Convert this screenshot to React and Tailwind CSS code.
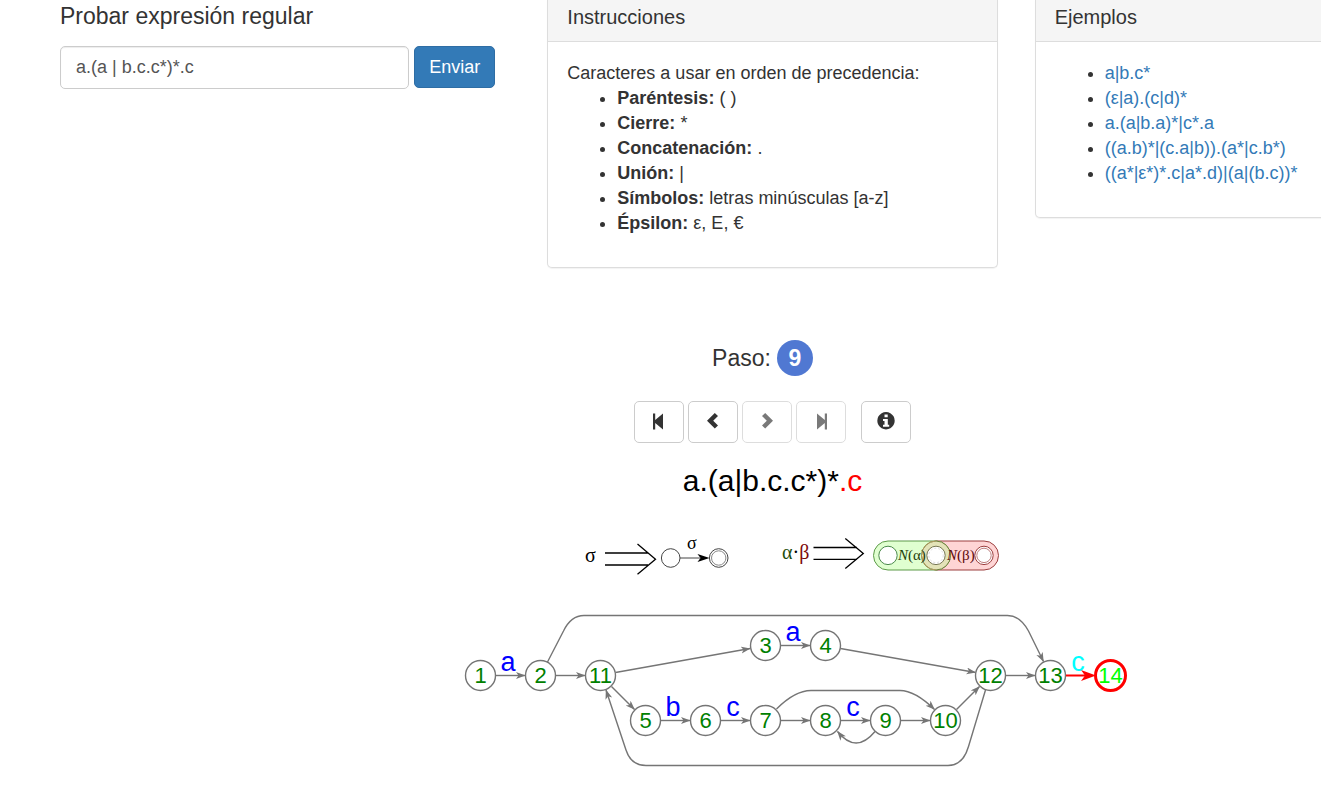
const RULES = [
  ['Paréntesis:', '( )'],
  ['Cierre:', '*'],
  ['Concatenación:', '.'],
  ['Unión:', '|'],
  ['Símbolos:', 'letras minúsculas [a-z]'],
  ['Épsilon:', 'ε, E, €'],
];

const EXAMPLES = [
  'a|b.c*',
  '(ε|a).(c|d)*',
  'a.(a|b.a)*|c*.a',
  '((a.b)*|(c.a|b)).(a*|c.b*)',
  '((a*|ε*)*.c|a*.d)|(a|(b.c))*',
];

const NODES = [
  [1, 480.5, 675.5],
  [2, 540.5, 675.5],
  [11, 600.5, 675.5],
  [3, 765.5, 645.5],
  [4, 825.5, 645.5],
  [5, 645.5, 720.5],
  [6, 705.5, 720.5],
  [7, 765.5, 720.5],
  [8, 825.5, 720.5],
  [9, 885.5, 720.5],
  [10, 945.5, 720.5],
  [12, 990.5, 675.5],
  [13, 1050.5, 675.5],
];

const EDGES = [
  'M495.5 675.5H525',
  'M555.5 675.5H585',
  'M615.5 672.5L750 648.5',
  'M780.5 645.5H810',
  'M840.5 648.5L975.5 672.5',
  'M611.5 686.5L634.5 709.5',
  'M660.5 720.5H690',
  'M720.5 720.5H750',
  'M780.5 720.5H810',
  'M840.5 720.5H870',
  'M900.5 720.5H930',
  'M956.5 709.5L979.5 686.5',
  'M1005.5 675.5H1035',
  'M547.5 662L563.5 631Q571 615.5 584 615.5H1007.5Q1020 615.5 1028.5 631L1043.5 661.5',
  'M985.5 690L968.5 746.5Q963 765.5 948 765.5H646Q631 765.5 626 750L606 690',
  'M776.5 709Q795 690.5 811 690.5H900Q915 690.5 934.5 709.5',
  'M875 731.5Q856 754.5 837.5 731.5',
];

const LABELS = [
  ['a', 508, 671],
  ['a', 793, 641],
  ['b', 673, 716],
  ['c', 733, 716],
  ['c', 853, 716],
];

function Panel({ title, children }) {
  return (
    <section className="self-start rounded-b-[5px] border border-t-0 border-[#ddd] bg-white shadow-[0_1px_1px_rgba(0,0,0,0.05)]">
      <h3 className="border-b border-[#ddd] bg-[#f5f5f5] px-[19px] pt-[5px] pb-[11px] text-[20px] leading-[25px]">
        {title}
      </h3>
      <div className="px-[19px] pt-[19px] pb-[31px]">{children}</div>
    </section>
  );
}

function StepButton({ label, disabled, children }) {
  return (
    <button
      type="button"
      aria-label={label}
      disabled={disabled}
      className="flex h-[42px] w-[50px] items-center justify-center rounded-[5px] border border-[#ccc] bg-white pb-[2px] text-[#333] disabled:opacity-65"
    >
      <svg width="18" height="18" viewBox="0 0 18 18" fill="currentColor" aria-hidden="true">
        {children}
      </svg>
    </button>
  );
}

function SymbolRule() {
  return (
    <svg
      className="shrink-0 font-['Liberation_Serif',serif]"
      width="212"
      height="55"
      viewBox="546 525 212 55"
      fill="none"
      stroke="#000"
    >
      <text x="585" y="562" fontSize="20" fill="#000" stroke="none">σ</text>
      <path strokeWidth="1.3" d="M605 553H648M605 565H648M637.5 544L655.5 559.2L637.5 574.3" />
      <circle cx="670.7" cy="558" r="9.3" stroke="#444" />
      <path stroke="#444" d="M680 558H700" />
      <path d="M709.5 558L697.5 554L700.5 558L697.5 562Z" fill="#000" stroke="none" />
      <text x="687" y="549" fontSize="18" fill="#000" stroke="none">σ</text>
      <circle cx="718.7" cy="558" r="9.3" stroke="#444" />
      <circle cx="718.7" cy="558" r="7.2" stroke="#888" />
    </svg>
  );
}

function ConcatRule() {
  return (
    <svg
      className="shrink-0 font-['Liberation_Serif',serif]"
      width="241"
      height="55"
      viewBox="758 525 241 55"
      fill="none"
    >
      <text x="782" y="559" fontSize="20">
        <tspan fill="#1d4d0b">α</tspan>
        <tspan fill="#000">·</tspan>
        <tspan fill="#7d0a0a">β</tspan>
      </text>
      <path stroke="#000" strokeWidth="1.3" d="M813.5 547.5H857M813.5 559.3H857M845.3 538.5L863.3 553.4L845.3 568.5" />
      <rect x="922.5" y="541" width="76" height="29" rx="14.5" fill="#ffd5d5" stroke="#9c3f3f" />
      <rect x="873.5" y="541" width="77" height="29" rx="14.5" fill="#e0ffd0" stroke="#5c9a48" />
      <path
        d="M936 541A14.5 14.5 0 0 1 936 570A14.5 14.5 0 0 1 936 541"
        fill="#e3e3b8"
        stroke="#6f7f3c"
      />
      <path d="M936 541A14.5 14.5 0 0 0 936 570" stroke="#b09a60" />
      <circle cx="888" cy="555.4" r="9.2" fill="#fff" stroke="#4c8a4c" />
      <circle cx="936" cy="555.4" r="9.2" fill="#fff" stroke="#777755" />
      <circle cx="936" cy="555.4" r="7.2" stroke="#ddd" strokeDasharray="2 2" />
      <circle cx="984" cy="555.4" r="9.2" fill="#fff" stroke="#9c3f3f" />
      <circle cx="984" cy="555.4" r="7.2" stroke="#c08080" />
      <text x="898" y="560" fontSize="15" fill="#1d3d0b">
        <tspan fontStyle="italic">N</tspan>(α)
      </text>
      <text x="947" y="560" fontSize="15" fill="#5d0a0a">
        <tspan fontStyle="italic">N</tspan>(β)
      </text>
    </svg>
  );
}

function Automaton() {
  return (
    <svg
      className="font-['Liberation_Sans',Arial,sans-serif]"
      width="729"
      height="175"
      viewBox="408 605 729 175"
      fill="none"
      textAnchor="middle"
      role="img"
      aria-label="Autómata"
    >
      <defs>
        <marker id="arrow" markerUnits="userSpaceOnUse" markerWidth="10" markerHeight="8" refX="9" refY="3.5" orient="auto">
          <path d="M0 0L9.5 3.5L0 7L2.5 3.5Z" fill="#757575" />
        </marker>
      </defs>
      {EDGES.map((d) => (
        <path key={d} d={d} stroke="#757575" strokeWidth="1.4" markerEnd="url(#arrow)" />
      ))}
      {NODES.map(([n, x, y]) => (
        <g key={n}>
          <circle cx={x} cy={y} r="15" fill="#fff" stroke="#757575" strokeWidth="1.4" />
          <text x={x} y={y + 7.5} fontSize="22" fill="green">{n}</text>
        </g>
      ))}
      {LABELS.map(([t, x, y]) => (
        <text key={x} x={x} y={y} fontSize="27" fill="blue">{t}</text>
      ))}
      <path d="M1066 675.5H1085" stroke="red" strokeWidth="2" />
      <path d="M1096 675.5L1081 670L1085 675.5L1081 681Z" fill="red" />
      <text x="1078" y="671" fontSize="27" fill="cyan">c</text>
      <circle cx="1110.5" cy="675.5" r="15" fill="#fff" stroke="red" strokeWidth="3" />
      <text x="1110.5" y="683" fontSize="22" fill="lime">14</text>
    </svg>
  );
}

export default function App() {
  return (
    <div className="min-h-screen overflow-hidden bg-white font-['Liberation_Sans',Arial,sans-serif] text-[18px] leading-[25px] text-[#333]">
      <main className="min-w-[1545px] px-[60px]">
        <div className="grid grid-cols-3 gap-[37px]">
          <form className="pr-[15px]" onSubmit={(e) => e.preventDefault()}>
            <label htmlFor="regex" className="block pt-1 text-[23px] leading-[25px]">
              Probar expresión regular
            </label>
            <div className="mt-[17px] flex gap-[5px]">
              <input
                id="regex"
                type="text"
                defaultValue="a.(a | b.c.c*)*.c"
                className="h-[43px] min-w-0 flex-1 rounded-[5px] border border-[#ccc] px-[15px] text-[#555] shadow-[inset_0_1px_1px_rgba(0,0,0,0.075)]"
              />
              <button
                type="submit"
                className="h-[42px] rounded-[5px] border border-[#2e6da4] bg-[#337ab7] px-[14px] text-white"
              >
                Enviar
              </button>
            </div>
          </form>

          <Panel title="Instrucciones">
            <p>Caracteres a usar en orden de precedencia:</p>
            <ul className="list-disc pl-[50px]">
              {RULES.map(([name, value]) => (
                <li key={name}>
                  <strong>{name}</strong> {value}
                </li>
              ))}
            </ul>
          </Panel>

          <Panel title="Ejemplos">
            <ul className="list-disc pl-[50px]">
              {EXAMPLES.map((text) => (
                <li key={text}>
                  <a href="#regex" className="text-[#337ab7]">{text}</a>
                </li>
              ))}
            </ul>
          </Panel>
        </div>

        <div className="mt-[72px] flex flex-col items-center">
          <div className="mr-5 flex items-center gap-[6px] text-[23px]">
            <span>Paso:</span>
            <span className="flex size-9 items-center justify-center rounded-full bg-[#5078d2] font-bold text-white">
              9
            </span>
          </div>

          <div className="mt-[25px] flex gap-1">
            <StepButton label="Primer paso">
              <path d="M3 1.5h2.2v6.6L13 1.5v16L5.200 10.900V17.500H3z" />
            </StepButton>
            <StepButton label="Paso anterior">
              <path d="M10.800 1L14 4L9.200 8.700L14 13.400L10.800 16.500L3 8.700z" />
            </StepButton>
            <StepButton label="Paso siguiente" disabled>
              <path d="M7.200 1L4 4L8.800 8.700L4 13.400L7.200 16.500L15 8.700z" />
            </StepButton>
            <StepButton label="Último paso" disabled>
              <path d="M15 1.500h-2.200v6.600L5 1.500v16l7.800-6.600v6.600H15z" />
            </StepButton>
            <div className="ml-[11px]">
              <StepButton label="Información">
                <path
                  fillRule="evenodd"
                  d="M9 0a8.700 8.700 0 1 0 .01 0zM7.500 2.500h3.200v2.800H7.500zM6 7h4.800v5.800h1.400v2H6v-2h1.500V9H6z"
                />
              </StepButton>
            </div>
          </div>

          <p className="mt-5 text-[30px] leading-[36px] text-black">
            a.(a|b.c.c*)*<span className="text-[red]">.c</span>
          </p>

          <div className="mt-[26px] flex">
            <SymbolRule />
            <ConcatRule />
          </div>

          <div className="mt-[25px]">
            <Automaton />
          </div>
        </div>
      </main>
    </div>
  );
}
